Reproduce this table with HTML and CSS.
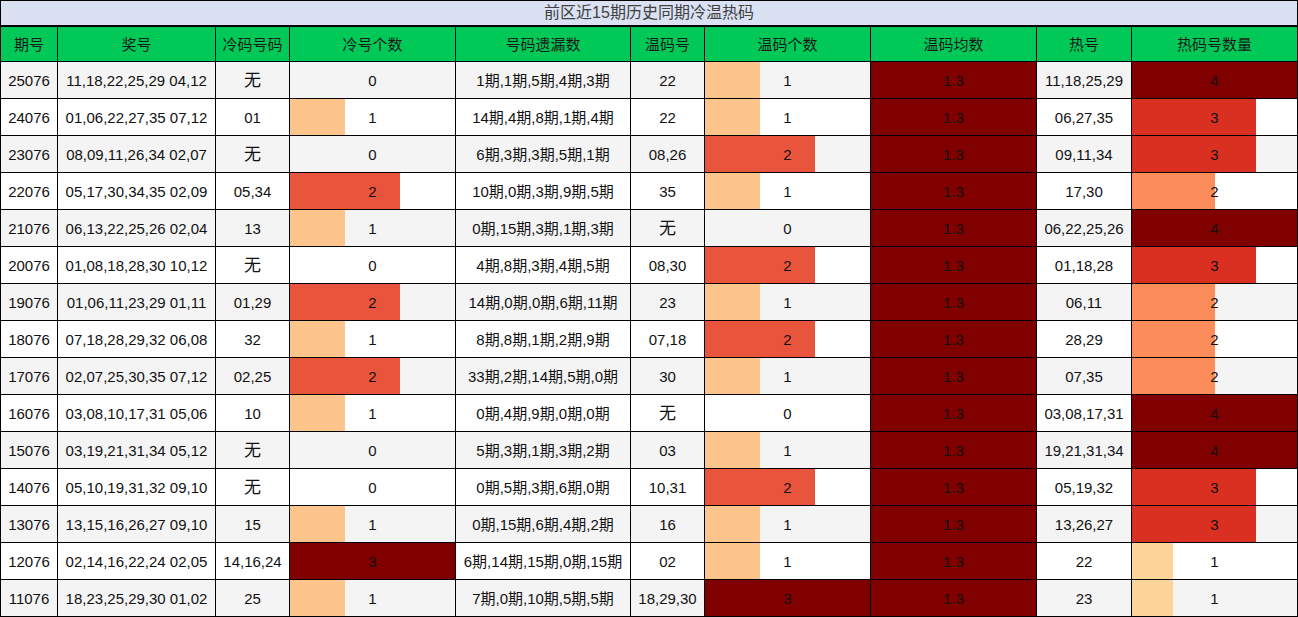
FILE: index.html
```html
<!DOCTYPE html>
<html lang="zh">
<head>
<meta charset="utf-8">
<title>前区近15期历史同期冷温热码</title>
<link rel="stylesheet" href="styles.css">
</head>
<body>
<div class="sheet">
  <div class="title">前区近15期历史同期冷温热码</div>
  <div class="grid">
    <div class="row head">
      <div>期号</div><div>奖号</div><div>冷码号码</div><div>冷号个数</div><div>号码遗漏数</div><div>温码号</div><div>温码个数</div><div>温码均数</div><div>热号</div><div>热码号数量</div>
    </div>
    <div class="row alt">
      <div>25076</div><div>11,18,22,25,29 04,12</div><div class="cjk">无</div><div>0</div><div>1期,1期,5期,4期,3期</div><div>22</div><div class="bar v1" style="--w:33.33%">1</div><div class="bar avg">1.3</div><div>11,18,25,29</div><div class="bar h4" style="--w:100%">4</div>
    </div>
    <div class="row">
      <div>24076</div><div>01,06,22,27,35 07,12</div><div>01</div><div class="bar v1" style="--w:33.33%">1</div><div>14期,4期,8期,1期,4期</div><div>22</div><div class="bar v1" style="--w:33.33%">1</div><div class="bar avg">1.3</div><div>06,27,35</div><div class="bar h3" style="--w:75%">3</div>
    </div>
    <div class="row alt">
      <div>23076</div><div>08,09,11,26,34 02,07</div><div class="cjk">无</div><div>0</div><div>6期,3期,3期,5期,1期</div><div>08,26</div><div class="bar v2" style="--w:66.67%">2</div><div class="bar avg">1.3</div><div>09,11,34</div><div class="bar h3" style="--w:75%">3</div>
    </div>
    <div class="row">
      <div>22076</div><div>05,17,30,34,35 02,09</div><div>05,34</div><div class="bar v2" style="--w:66.67%">2</div><div>10期,0期,3期,9期,5期</div><div>35</div><div class="bar v1" style="--w:33.33%">1</div><div class="bar avg">1.3</div><div>17,30</div><div class="bar h2" style="--w:50%">2</div>
    </div>
    <div class="row alt">
      <div>21076</div><div>06,13,22,25,26 02,04</div><div>13</div><div class="bar v1" style="--w:33.33%">1</div><div>0期,15期,3期,1期,3期</div><div class="cjk">无</div><div>0</div><div class="bar avg">1.3</div><div>06,22,25,26</div><div class="bar h4" style="--w:100%">4</div>
    </div>
    <div class="row">
      <div>20076</div><div>01,08,18,28,30 10,12</div><div class="cjk">无</div><div>0</div><div>4期,8期,3期,4期,5期</div><div>08,30</div><div class="bar v2" style="--w:66.67%">2</div><div class="bar avg">1.3</div><div>01,18,28</div><div class="bar h3" style="--w:75%">3</div>
    </div>
    <div class="row alt">
      <div>19076</div><div>01,06,11,23,29 01,11</div><div>01,29</div><div class="bar v2" style="--w:66.67%">2</div><div>14期,0期,0期,6期,11期</div><div>23</div><div class="bar v1" style="--w:33.33%">1</div><div class="bar avg">1.3</div><div>06,11</div><div class="bar h2" style="--w:50%">2</div>
    </div>
    <div class="row">
      <div>18076</div><div>07,18,28,29,32 06,08</div><div>32</div><div class="bar v1" style="--w:33.33%">1</div><div>8期,8期,1期,2期,9期</div><div>07,18</div><div class="bar v2" style="--w:66.67%">2</div><div class="bar avg">1.3</div><div>28,29</div><div class="bar h2" style="--w:50%">2</div>
    </div>
    <div class="row alt">
      <div>17076</div><div>02,07,25,30,35 07,12</div><div>02,25</div><div class="bar v2" style="--w:66.67%">2</div><div>33期,2期,14期,5期,0期</div><div>30</div><div class="bar v1" style="--w:33.33%">1</div><div class="bar avg">1.3</div><div>07,35</div><div class="bar h2" style="--w:50%">2</div>
    </div>
    <div class="row">
      <div>16076</div><div>03,08,10,17,31 05,06</div><div>10</div><div class="bar v1" style="--w:33.33%">1</div><div>0期,4期,9期,0期,0期</div><div class="cjk">无</div><div>0</div><div class="bar avg">1.3</div><div>03,08,17,31</div><div class="bar h4" style="--w:100%">4</div>
    </div>
    <div class="row alt">
      <div>15076</div><div>03,19,21,31,34 05,12</div><div class="cjk">无</div><div>0</div><div>5期,3期,1期,3期,2期</div><div>03</div><div class="bar v1" style="--w:33.33%">1</div><div class="bar avg">1.3</div><div>19,21,31,34</div><div class="bar h4" style="--w:100%">4</div>
    </div>
    <div class="row">
      <div>14076</div><div>05,10,19,31,32 09,10</div><div class="cjk">无</div><div>0</div><div>0期,5期,3期,6期,0期</div><div>10,31</div><div class="bar v2" style="--w:66.67%">2</div><div class="bar avg">1.3</div><div>05,19,32</div><div class="bar h3" style="--w:75%">3</div>
    </div>
    <div class="row alt">
      <div>13076</div><div>13,15,16,26,27 09,10</div><div>15</div><div class="bar v1" style="--w:33.33%">1</div><div>0期,15期,6期,4期,2期</div><div>16</div><div class="bar v1" style="--w:33.33%">1</div><div class="bar avg">1.3</div><div>13,26,27</div><div class="bar h3" style="--w:75%">3</div>
    </div>
    <div class="row">
      <div>12076</div><div>02,14,16,22,24 02,05</div><div>14,16,24</div><div class="bar v3" style="--w:100%">3</div><div>6期,14期,15期,0期,15期</div><div>02</div><div class="bar v1" style="--w:33.33%">1</div><div class="bar avg">1.3</div><div>22</div><div class="bar h1" style="--w:25%">1</div>
    </div>
    <div class="row alt">
      <div>11076</div><div>18,23,25,29,30 01,02</div><div>25</div><div class="bar v1" style="--w:33.33%">1</div><div>7期,0期,10期,5期,5期</div><div>18,29,30</div><div class="bar v3" style="--w:100%">3</div><div class="bar avg">1.3</div><div>23</div><div class="bar h1" style="--w:25%">1</div>
    </div>
  </div>
</div>
</body>
</html>
```

FILE: styles.css
```css
html, body {
  margin: 0;
  padding: 0;
  background: #fff;
}

.sheet {
  width: 1298px;
  box-sizing: border-box;
  background: #000;
  padding: 1px;
  font-family: "Liberation Sans", "Noto Sans CJK SC", sans-serif;
  font-size: 15px;
  color: #111;
}

.title {
  height: 24px;
  margin-bottom: 2px;
  background: #d9e1f2;
  color: #404040;
  font-size: 16px;
  line-height: 24px;
  text-align: center;
}

.grid {
  display: grid;
  grid-template-columns: 56px 157px 73px 165px 174px 73px 165px 165px 94px 165px;
  grid-template-rows: 34px;
  grid-auto-rows: 36px;
  gap: 1px;
}

.row {
  display: contents;
  --bg: #fff;
}

.row.alt {
  --bg: #f4f4f4;
}

.row > div {
  display: flex;
  align-items: center;
  justify-content: center;
  background-color: var(--bg);
  white-space: nowrap;
  line-height: 1;
}

.row.head > div {
  background-color: #00c957;
  color: #1a1a1a;
}

.cjk {
  font-size: 17px;
}

.bar {
  background-image: linear-gradient(90deg, var(--c) var(--w), transparent var(--w));
  background-repeat: no-repeat;
}

.v1 { --c: #fdc48c; }
.v2 { --c: #e9553c; }
.v3 { --c: #800000; }

.h1 { --c: #fed49b; }
.h2 { --c: #fc8d5a; }
.h3 { --c: #d93022; }
.h4 { --c: #800000; }

.avg {
  --c: #800000;
  --w: 100%;
}
```
